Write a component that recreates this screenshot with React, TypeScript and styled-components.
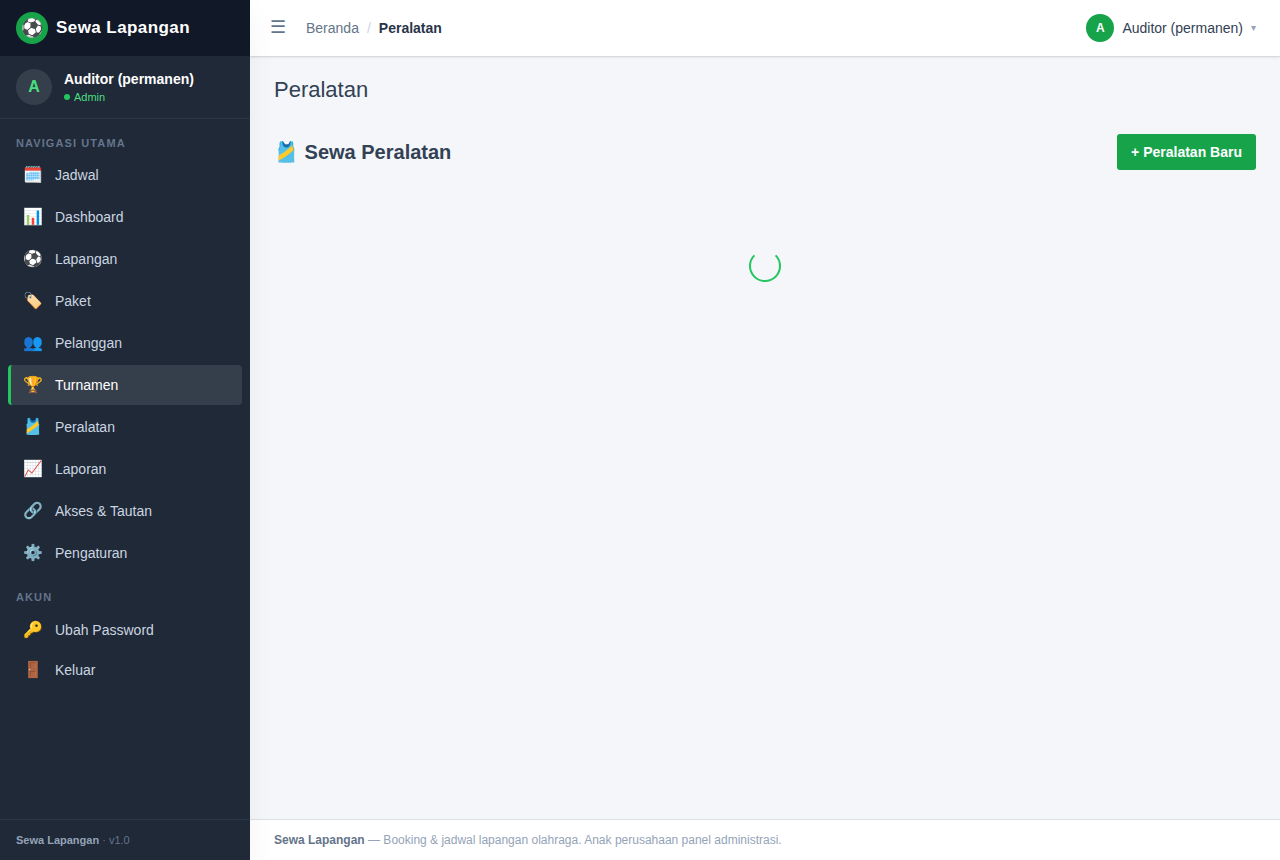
import React from "react";
import styled, { createGlobalStyle } from "styled-components";

const GlobalStyle = createGlobalStyle`
  *, *::before, *::after { box-sizing: border-box; }
  body {
    margin: 0;
    background: #f4f6f9;
    color: #334155;
    font-family: "Liberation Sans", Arial, sans-serif;
    font-size: 14px;
    line-height: 20px;
  }
  h1, h2, p, ul, ol { margin: 0; padding: 0; }
  ul, ol { list-style: none; }
  a { color: inherit; text-decoration: none; }
  button { font: inherit; cursor: pointer; }
`;

const Shell = styled.div`
  display: grid;
  grid-template-columns: 250px minmax(0, 1fr);
  min-height: 100vh;
`;

const Sidebar = styled.aside`
  position: relative;
  z-index: 2;
  display: flex;
  flex-direction: column;
  background: #1f2937;
  color: #cbd5e1;
  box-shadow: 0 14px 28px rgba(0, 0, 0, 0.05);
`;

const Brand = styled.a`
  display: flex;
  align-items: center;
  gap: 8px;
  height: 56px;
  padding: 0 16px;
  background: #111827;
  color: #fff;
  font-size: 17px;
  font-weight: 700;
  letter-spacing: 0.025em;
`;

const BrandMark = styled.span`
  display: grid;
  place-items: center;
  width: 32px;
  height: 32px;
  border-radius: 50%;
  background: #16a34a;
  font-size: 18px;
  font-weight: 400;
  letter-spacing: normal;
`;

const Profile = styled.div`
  display: flex;
  align-items: center;
  gap: 12px;
  padding: 13px 16px;
  border-bottom: 1px solid rgba(255, 255, 255, 0.06);
`;

const Avatar = styled.span<{ $large?: boolean }>`
  display: grid;
  place-items: center;
  width: ${(p) => (p.$large ? 36 : 28)}px;
  height: ${(p) => (p.$large ? 36 : 28)}px;
  border-radius: 50%;
  background: ${(p) => (p.$large ? "rgba(255, 255, 255, 0.1)" : "#16a34a")};
  color: ${(p) => (p.$large ? "#4ade80" : "#fff")};
  font-size: ${(p) => (p.$large ? 16 : 12)}px;
  font-weight: 700;
`;

const ProfileName = styled.p`
  color: #fff;
  font-weight: 700;
  line-height: 20px;
`;

const ProfileRole = styled.p`
  display: flex;
  align-items: center;
  gap: 4px;
  color: #4ade80;
  font-size: 11px;
  line-height: 16px;

  &::before {
    content: "";
    width: 6px;
    height: 6px;
    border-radius: 50%;
    background: #22c55e;
  }
`;

const Nav = styled.nav`
  flex: 1;
`;

const NavHeading = styled.h2`
  padding: 16px 16px 4px;
  color: #64748b;
  font-size: 11px;
  font-weight: 700;
  line-height: 16px;
  letter-spacing: 0.1em;
  text-transform: uppercase;
`;

const Menu = styled.ul<{ $dense?: boolean }>`
  display: flex;
  flex-direction: column;
  gap: ${(p) => (p.$dense ? 0 : 2)}px;
  padding: ${(p) => (p.$dense ? 1 : 0)}px 8px 0;
`;

const MenuLink = styled.a<{ $active?: boolean }>`
  display: flex;
  align-items: center;
  gap: 12px;
  width: 100%;
  height: 40px;
  padding: 0 12px;
  border: 0 solid ${(p) => (p.$active ? "#22c55e" : "transparent")};
  border-left-width: 3px;
  border-radius: 4px;
  background: ${(p) => (p.$active ? "rgba(255, 255, 255, 0.1)" : "transparent")};
  color: ${(p) => (p.$active ? "#fff" : "#cbd5e1")};
  text-align: left;
`;

const MenuIcon = styled.span`
  display: flex;
  justify-content: center;
  width: 20px;
  font-size: 16px;
`;

const SidebarFooter = styled.div`
  padding: 10px 16px;
  border-top: 1px solid rgba(255, 255, 255, 0.06);
  color: #64748b;
  font-size: 11px;

  strong { color: #94a3b8; }
`;

const Page = styled.div`
  display: flex;
  flex-direction: column;
`;

const Topbar = styled.header`
  display: flex;
  align-items: center;
  justify-content: space-between;
  height: 56px;
  padding: 0 24px 0 16px;
  background: #fff;
  box-shadow: 0 1px 3px rgba(0, 0, 0, 0.12), 0 1px 1px rgba(0, 0, 0, 0.04);
`;

const TopbarGroup = styled.div`
  display: flex;
  align-items: center;
  gap: 16px;
`;

const PlainButton = styled.button`
  display: flex;
  align-items: center;
  gap: 8px;
  padding: 0;
  border: 0;
  background: none;
  color: #334155;
`;

const ToggleButton = styled(PlainButton)`
  padding: 2px 4px 4px;
  color: #64748b;
  font-size: 18px;
  line-height: 18px;
`;

const Crumbs = styled.ol`
  display: flex;
  gap: 8px;
  color: #64748b;

  li + li::before {
    content: "/";
    margin-right: 8px;
    color: #cbd5e1;
    font-weight: 400;
  }
`;

const CurrentCrumb = styled.li`
  color: #293548;
  font-weight: 700;
`;

const Caret = styled.span`
  color: #94a3b8;
  font-size: 10px;
`;

const Content = styled.main`
  flex: 1;
  padding: 16px 24px;
`;

const PageTitle = styled.h1`
  color: #334155;
  font-size: 22px;
  font-weight: 400;
  line-height: 36px;
`;

const SectionBar = styled.div`
  display: flex;
  align-items: center;
  justify-content: space-between;
  margin-top: 26px;
`;

const SectionTitle = styled.h2`
  color: #334155;
  font-size: 20px;
  font-weight: 700;
  line-height: 28px;
`;

const PrimaryButton = styled.button`
  padding: 8px 14px;
  border: 0;
  border-radius: 3px;
  background: #16a34a;
  color: #fff;
  font-weight: 700;
`;

const Loading = styled.div`
  display: flex;
  justify-content: center;
  padding: 80px 0;
`;

const Spinner = styled.span`
  width: 32px;
  height: 32px;
  border: 2px solid #22c55e;
  border-top-color: transparent;
  border-radius: 50%;
`;

const PageFooter = styled.footer`
  padding: 10px 24px;
  border-top: 1px solid #dee2e6;
  background: #fff;
  color: #94a3b8;
  font-size: 12px;

  strong { color: #64748b; }
`;

const mainMenu = [
  { icon: "🗓️", label: "Jadwal" },
  { icon: "📊", label: "Dashboard" },
  { icon: "⚽", label: "Lapangan" },
  { icon: "🏷️", label: "Paket" },
  { icon: "👥", label: "Pelanggan" },
  { icon: "🏆", label: "Turnamen", active: true },
  { icon: "🎽", label: "Peralatan" },
  { icon: "📈", label: "Laporan" },
  { icon: "🔗", label: "Akses & Tautan" },
  { icon: "⚙️", label: "Pengaturan" },
];

export default function App() {
  return (
    <>
      <GlobalStyle />
      <Shell>
        <Sidebar>
          <Brand href="#">
            <BrandMark aria-hidden="true">⚽</BrandMark>
            Sewa Lapangan
          </Brand>
          <Profile>
            <Avatar $large>A</Avatar>
            <div>
              <ProfileName>Auditor (permanen)</ProfileName>
              <ProfileRole>Admin</ProfileRole>
            </div>
          </Profile>
          <Nav>
            <NavHeading>Navigasi Utama</NavHeading>
            <Menu>
              {mainMenu.map((item) => (
                <li key={item.label}>
                  <MenuLink href="#" $active={item.active}>
                    <MenuIcon aria-hidden="true">{item.icon}</MenuIcon>
                    {item.label}
                  </MenuLink>
                </li>
              ))}
            </Menu>
            <NavHeading>Akun</NavHeading>
            <Menu $dense>
              <li>
                <MenuLink as="button" type="button">
                  <MenuIcon aria-hidden="true">🔑</MenuIcon>
                  Ubah Password
                </MenuLink>
              </li>
              <li>
                <MenuLink as="button" type="button">
                  <MenuIcon aria-hidden="true">🚪</MenuIcon>
                  Keluar
                </MenuLink>
              </li>
            </Menu>
          </Nav>
          <SidebarFooter>
            <strong>Sewa Lapangan</strong> · v1.0
          </SidebarFooter>
        </Sidebar>
        <Page>
          <Topbar>
            <TopbarGroup>
              <ToggleButton type="button" aria-label="Menu">☰</ToggleButton>
              <Crumbs>
                <li><a href="#">Beranda</a></li>
                <CurrentCrumb aria-current="page">Peralatan</CurrentCrumb>
              </Crumbs>
            </TopbarGroup>
            <PlainButton type="button">
              <Avatar>A</Avatar>
              Auditor (permanen)
              <Caret aria-hidden="true">▾</Caret>
            </PlainButton>
          </Topbar>
          <Content>
            <PageTitle>Peralatan</PageTitle>
            <SectionBar>
              <SectionTitle>🎽 Sewa Peralatan</SectionTitle>
              <PrimaryButton type="button">+ Peralatan Baru</PrimaryButton>
            </SectionBar>
            <Loading role="status" aria-label="Memuat">
              <Spinner />
            </Loading>
          </Content>
          <PageFooter>
            <strong>Sewa Lapangan</strong> — Booking &amp; jadwal lapangan olahraga. Anak perusahaan panel administrasi.
          </PageFooter>
        </Page>
      </Shell>
    </>
  );
}
